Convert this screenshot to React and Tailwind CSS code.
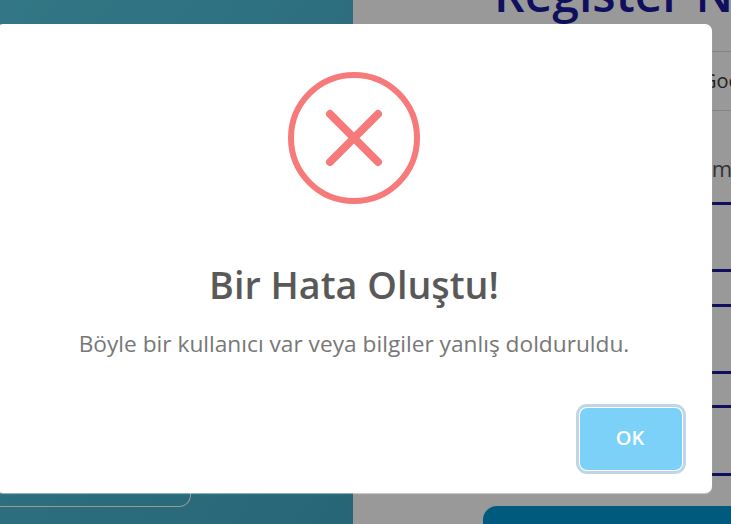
export default function App() {
  return (
    <div className="relative h-[524px] w-[731px] overflow-hidden bg-white font-['Open_Sans',sans-serif]">
      {/* Sayfa */}
      <div className="flex h-full">
        <div className="flex w-[353px] shrink-0 flex-col justify-end bg-gradient-to-br from-[#55c7df] to-[#41aac6] pb-[17px]">
          <div className="h-[60px] w-[191px] rounded-br-[12px] border border-l-0 border-white" />
        </div>

        <div className="min-w-0 flex-1 overflow-hidden">
          <h1 className="mt-[-35px] ml-[141px] whitespace-nowrap text-[48px] font-semibold leading-[57px] text-[#1a1a9c]">
            Register Now
          </h1>

          <div className="mt-[29px] flex h-[60px] items-center border-y border-[#dddddd] pl-[349px] text-[20px] text-[#383838]">
            Google
          </div>

          <div className="mt-[44px] whitespace-nowrap pl-[330px] text-[22px] leading-[27px] text-[#555555]">
            Name
          </div>

          <div className="mt-[20px] flex flex-col">
            <div className="ml-[130px] border-b-[3px] border-[#1a1a9c]" />
            <div className="ml-[130px] mt-[64px] border-b-[3px] border-[#1a1a9c]" />
            <div className="ml-[130px] mt-[32px] border-b-[3px] border-[#1a1a9c]" />
            <div className="ml-[130px] mt-[64px] border-b-[3px] border-[#1a1a9c]" />
            <div className="ml-[130px] mt-[31px] border-b-[3px] border-[#1a1a9c]" />
            <div className="ml-[130px] mt-[65px] border-b-[3px] border-[#1a1a9c]" />
          </div>

          <div className="ml-[130px] mt-[30px] h-[40px] rounded-tl-[14px] bg-[#0096d0]" />
        </div>
      </div>

      {/* Karartma */}
      <div className="absolute inset-0 bg-black/40" />

      {/* Hata penceresi */}
      <div className="absolute left-[-4px] top-[24px] flex h-[469px] w-[716px] flex-col items-center rounded-[7px] bg-white pt-[48px] shadow-[0_1px_1px_rgba(255,255,255,0.5)]">
        <svg width="132" height="132" viewBox="0 0 132 132" fill="none" className="shrink-0">
          <circle cx="66" cy="66" r="63" stroke="#f67a7a" strokeWidth="6" />
          <path d="M42 42L90 90M90 42L42 90" stroke="#f67a7a" strokeWidth="8" strokeLinecap="round" />
        </svg>

        <h2 className="mt-[56px] text-[37.7px] font-semibold leading-[50px] text-[#595959]">
          Bir Hata Oluştu!
        </h2>

        <p className="mt-[19px] text-[22.7px] leading-[30px] text-[#777777]">
          Böyle bir kullanıcı var veya bilgiler yanlış dolduruldu.
        </p>

        <div className="mt-[49px] flex w-full justify-end pr-[30px]">
          <button className="h-[62px] w-[102px] rounded-[7px] bg-[#7cd1f9] pb-[2px] pr-[2px] text-[20px] font-semibold text-white shadow-[0_0_0_1px_#fff,0_0_0_4px_rgba(43,114,165,0.29)]">
            OK
          </button>
        </div>
      </div>
    </div>
  );
}
